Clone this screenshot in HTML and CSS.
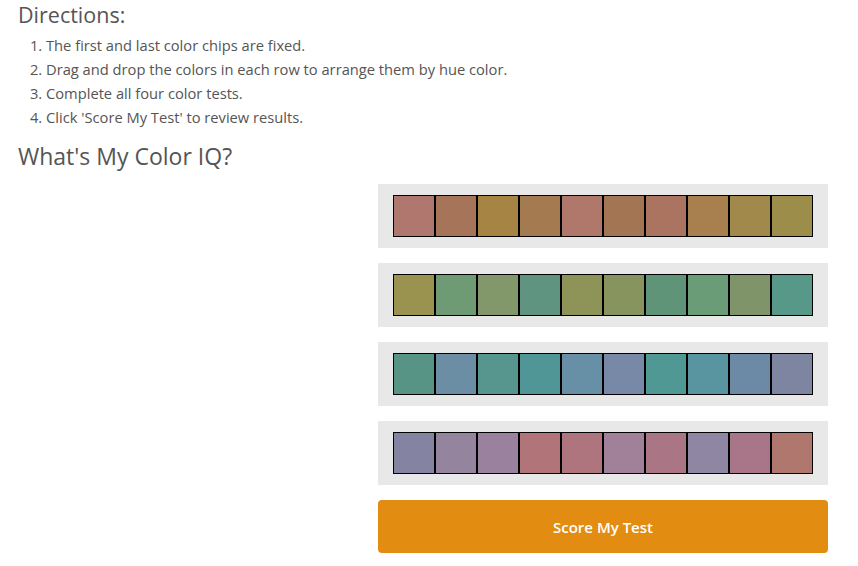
FILE: index.html
```html
<!DOCTYPE html>
<html>
<head>
<meta charset="utf-8">
<link rel="stylesheet" href="styles.css">
</head>
<body>
<main class="page">
  <h2 class="title">Directions:</h2>
  <ol class="steps">
    <li>The first and last color chips are fixed.</li>
    <li>Drag and drop the colors in each row to arrange them by hue color.</li>
    <li>Complete all four color tests.</li>
    <li>Click 'Score My Test' to review results.</li>
  </ol>
  <h2 class="title title-iq">What's My Color IQ?</h2>
  <section class="test">
    <div class="spacer"></div>
    <div class="rows">
      <div class="row">
        <span class="chip c1-1"></span><span class="chip c1-2"></span><span class="chip c1-3"></span><span class="chip c1-4"></span><span class="chip c1-5"></span><span class="chip c1-6"></span><span class="chip c1-7"></span><span class="chip c1-8"></span><span class="chip c1-9"></span><span class="chip c1-10"></span>
      </div>
      <div class="row">
        <span class="chip c2-1"></span><span class="chip c2-2"></span><span class="chip c2-3"></span><span class="chip c2-4"></span><span class="chip c2-5"></span><span class="chip c2-6"></span><span class="chip c2-7"></span><span class="chip c2-8"></span><span class="chip c2-9"></span><span class="chip c2-10"></span>
      </div>
      <div class="row">
        <span class="chip c3-1"></span><span class="chip c3-2"></span><span class="chip c3-3"></span><span class="chip c3-4"></span><span class="chip c3-5"></span><span class="chip c3-6"></span><span class="chip c3-7"></span><span class="chip c3-8"></span><span class="chip c3-9"></span><span class="chip c3-10"></span>
      </div>
      <div class="row">
        <span class="chip c4-1"></span><span class="chip c4-2"></span><span class="chip c4-3"></span><span class="chip c4-4"></span><span class="chip c4-5"></span><span class="chip c4-6"></span><span class="chip c4-7"></span><span class="chip c4-8"></span><span class="chip c4-9"></span><span class="chip c4-10"></span>
      </div>
      <button class="score">Score My Test</button>
    </div>
  </section>
</main>
</body>
</html>
```
FILE: styles.css
```css
* { box-sizing: border-box; }
html, body { margin: 0; padding: 0; background: #fff; }
body {
  font-family: "Open Sans", "Noto Sans", sans-serif;
  color: #555;
}
.page { padding: 0 30px 0 18px; }
.title {
  margin: 0;
  font-size: 21.5px;
  font-weight: 400;
  line-height: 30px;
  color: #555;
}
.title-iq { margin-top: 12px; font-size: 23px; }
.steps {
  margin: 3px 0 0 0;
  padding-left: 28px;
  font-size: 14.7px;
  line-height: 24px;
}
.test {
  display: flex;
  margin-top: 13px;
}
.spacer { flex: 1; }
.rows {
  width: 450px;
  display: flex;
  flex-direction: column;
  gap: 15px;
}
.row {
  background: #e8e8e8;
  height: 64px;
  display: flex;
  justify-content: center;
  align-items: center;
}
.chip {
  width: 42px;
  height: 42px;
  border: 1px solid #000;
}
.score {
  height: 53px;
  border: 0;
  border-radius: 4px;
  background: #e38c12;
  color: #fff;
  font-family: "Open Sans", "Noto Sans", sans-serif;
  font-size: 15px;
  font-weight: 600;
}
.c1-1 { background: #b0776e; } .c1-2 { background: #a57459; } .c1-3 { background: #a58444; }
.c1-4 { background: #a47a50; } .c1-5 { background: #b0786b; } .c1-6 { background: #a47552; }
.c1-7 { background: #ab7461; } .c1-8 { background: #a8804f; } .c1-9 { background: #a0894a; }
.c1-10 { background: #9c8d4b; }
.c2-1 { background: #9a924f; } .c2-2 { background: #6e9a74; } .c2-3 { background: #82986a; }
.c2-4 { background: #5f9481; } .c2-5 { background: #8e9458; } .c2-6 { background: #87945e; }
.c2-7 { background: #5f9479; } .c2-8 { background: #6a9c78; } .c2-9 { background: #7f9468; }
.c2-10 { background: #589889; }
.c3-1 { background: #579485; } .c3-2 { background: #6b8ea4; } .c3-3 { background: #56968f; }
.c3-4 { background: #509697; } .c3-5 { background: #6790a7; } .c3-6 { background: #7888a7; }
.c3-7 { background: #509893; } .c3-8 { background: #5895a1; } .c3-9 { background: #6c89a5; }
.c3-10 { background: #7e85a1; }
.c4-1 { background: #8484a2; } .c4-2 { background: #95849e; } .c4-3 { background: #9a829e; }
.c4-4 { background: #b07479; } .c4-5 { background: #ae757f; } .c4-6 { background: #a1809a; }
.c4-7 { background: #aa7585; } .c4-8 { background: #8f86a3; } .c4-9 { background: #a87589; }
.c4-10 { background: #b0776f; }
```
